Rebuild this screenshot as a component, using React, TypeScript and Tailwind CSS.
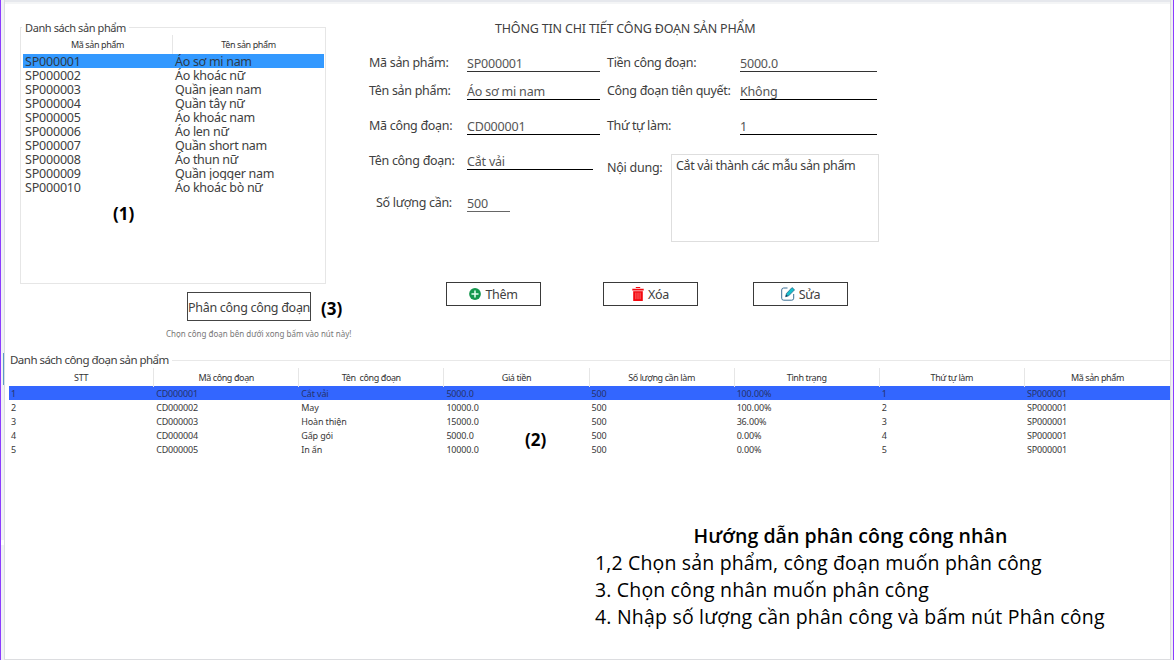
import React from "react";

const products = [
  ["SP000001", "Áo sơ mi nam"],
  ["SP000002", "Áo khoác nữ"],
  ["SP000003", "Quần jean nam"],
  ["SP000004", "Quần tây nữ"],
  ["SP000005", "Áo khoác nam"],
  ["SP000006", "Áo len nữ"],
  ["SP000007", "Quần short nam"],
  ["SP000008", "Áo thun nữ"],
  ["SP000009", "Quần jogger nam"],
  ["SP000010", "Áo khoác bò nữ"],
];

const stageHeaders = [
  "STT",
  "Mã công đoạn",
  "Tên\u00a0 công đoạn",
  "Giá tiền",
  "Số lượng cần làm",
  "Tình trạng",
  "Thứ tự làm",
  "Mã sản phẩm",
];

const stages = [
  ["1", "CD000001", "Cắt vải", "5000.0", "500", "100.00%", "1", "SP000001"],
  ["2", "CD000002", "May", "10000.0", "500", "100.00%", "2", "SP000001"],
  ["3", "CD000003", "Hoàn thiện", "15000.0", "500", "36.00%", "3", "SP000001"],
  ["4", "CD000004", "Gấp gói", "5000.0", "500", "0.00%", "4", "SP000001"],
  ["5", "CD000005", "In ấn", "10000.0", "500", "0.00%", "5", "SP000001"],
];

type FieldProps = {
  label: string;
  value: string;
  row: string;
  labelBox: string;
  valueBox: string;
};

function Field({ label, value, row, labelBox, valueBox }: FieldProps) {
  return (
    <div className={`flex items-end whitespace-nowrap ${row}`}>
      <div className={`shrink-0 leading-[18px] ${labelBox}`}>{label}</div>
      <div className={`shrink-0 border-b leading-[15px] text-[#555] ${valueBox}`}>{value}</div>
    </div>
  );
}

function ActionButton({ label, icon, className }: { label: string; icon: React.ReactNode; className: string }) {
  return (
    <button
      className={`flex h-[24px] w-[95px] items-center justify-center gap-[4px] border border-[#3a3a3a] bg-white ${className}`}
    >
      {icon}
      <span className="pt-[2px] leading-[18px] tracking-[-0.3px]">{label}</span>
    </button>
  );
}

function AddIcon() {
  return (
    <svg width="12" height="12" viewBox="0 0 12 12">
      <circle cx="6" cy="6" r="5.9" fill="#16984f" />
      <path d="M6 3v6M3 6h6" stroke="#e8fff2" strokeWidth="1.5" strokeLinecap="round" />
    </svg>
  );
}

function TrashIcon() {
  return (
    <svg width="12" height="14" viewBox="0 0 12 14">
      <path d="M3.8 0h4.4v1H3.8zM0.3 1.7h11.4v1.8H0.3z" fill="#f4080f" />
      <path d="M1.2 4.2h9.6V14H1.2z" fill="#f4080f" />
      <path d="M3.9 5.6v6.6M6 5.6v6.6M8.1 5.6v6.6" stroke="#ff9a9a" strokeWidth="0.7" />
    </svg>
  );
}

function EditIcon() {
  return (
    <svg width="14" height="14" viewBox="0 0 14 14">
      <path
        d="M6.5 1H2.6A2 2 0 0 0 .7 3v8.2a2 2 0 0 0 2 2h8a2 2 0 0 0 2-2V7"
        fill="none"
        stroke="#3a7096"
        strokeWidth="1"
      />
      <path d="M4.6 9.7l.9-3.3L11 .6l2.6 2.2-5.9 6z" fill="#18bfcd" stroke="#1d5c80" strokeWidth="0.7" />
      <path d="M4.6 9.7l.5-2.2 1.8 1.6z" fill="#173f5f" />
    </svg>
  );
}

export default function App() {
  return (
    <div className="flex h-[660px] w-[1174px] overflow-hidden bg-white font-['Noto_Sans',sans-serif] text-[12.5px] tracking-[-0.2px] text-[#404040]">
      <div className="w-px shrink-0 bg-[#8b3dff]" />
      <div className="flex w-[4px] shrink-0 flex-col border-r border-[#d9dde0] bg-[#f1f2f4]">
        <div className="mt-[353px] h-[32px] w-px self-end bg-[#5b9bc8]" />
        <div className="mt-[155px] h-[5px] w-[3px] bg-white" />
      </div>
      <div className="flex min-w-0 flex-1 flex-col border-b border-[#dcdde0]">
        <div className="h-[2px] shrink-0 bg-[#e6e8ed]" />
        <div className="h-[2px] shrink-0 bg-[#f4f5f6]" />

        <div className="flex h-[348px] shrink-0">
          <section className="ml-[15px] w-[349px] shrink-0">
            <fieldset className="mt-[16px] flex h-[264px] w-[306px] flex-col border border-[#e6e6e6] pl-[2px] pr-px">
              <legend className="-ml-px h-[15px] pl-[3px] pr-[3px] text-[11px] leading-[15px] tracking-[-0.4px]">
                Danh sách sản phẩm
              </legend>
              <div className="flex h-[19px] shrink-0 text-center text-[9px] leading-[20px] tracking-[-0.4px] text-[#333]">
                <div className="w-[150px] border-r border-[#e6e6e6]">Mã sản phẩm</div>
                <div className="flex-1">Tên sản phẩm</div>
              </div>
              {products.map(([code, name], i) => (
                <div
                  key={code}
                  className={`flex h-[14px] w-[301px] shrink-0 overflow-hidden whitespace-nowrap leading-[16px] ${
                    i === 0 ? "bg-[#3399ff] text-[#2c3a4a]" : ""
                  }`}
                >
                  <div className="w-[150px] pl-[2px]">{code}</div>
                  <div className="pl-[2px] tracking-[-0.3px]">{name}</div>
                </div>
              ))}
              <div className="pl-[90px] pt-[8px] text-[17px] font-bold leading-[24px] tracking-normal text-black">(1)</div>
            </fieldset>
            <div className="ml-[167px] mt-[8px] flex items-center">
              <button className="flex h-[29px] w-[124px] shrink-0 items-center justify-center whitespace-nowrap border border-[#444] pt-[3px] leading-[20px] tracking-[-0.3px]">
                Phân công công đoạn
              </button>
              <span className="ml-[10px] pt-[4px] text-[17px] font-bold leading-[24px] tracking-normal text-black">(3)</span>
            </div>
            <div className="ml-[146px] mt-[6px] whitespace-nowrap text-[8px] leading-[14px] tracking-normal text-[#777]">
              Chọn công đoạn bên dưới xong bấm vào nút này!
            </div>
          </section>

          <section className="w-[512px]">
            <h1 className="pl-[126px] pt-[16px] leading-[18px] tracking-[-0.18px]">THÔNG TIN CHI TIẾT CÔNG ĐOẠN SẢN PHẨM</h1>
            <div className="mt-[14px] flex">
              <div className="w-[238px] shrink-0">
                <Field label="Mã sản phẩm:" value="SP000001" row="h-[20px]" labelBox="w-[98px] tracking-[-0.3px]" valueBox="w-[133px] border-[#333]" />
                <Field label="Tên sản phẩm:" value="Áo sơ mi nam" row="h-[28px]" labelBox="w-[98px] tracking-[-0.3px]" valueBox="w-[133px] border-black" />
                <Field label="Mã công đoạn:" value="CD000001" row="h-[35px]" labelBox="w-[98px] tracking-[-0.3px]" valueBox="w-[133px] border-black" />
                <Field label="Tên công đoạn:" value="Cắt vải" row="h-[35px]" labelBox="w-[98px] tracking-[-0.3px]" valueBox="w-[126px] border-black" />
                <Field label="Số lượng cần:" value="500" row="h-[42px]" labelBox="w-[98px] pl-[7px] tracking-[-0.3px]" valueBox="w-[43px] border-[#666]" />
              </div>
              <div className="w-[272px] shrink-0">
                <Field label="Tiền công đoạn:" value="5000.0" row="h-[20px]" labelBox="w-[133px] tracking-[-0.3px]" valueBox="w-[137px] border-[#333]" />
                <Field label="Công đoạn tiên quyết:" value="Không" row="h-[28px]" labelBox="w-[133px] tracking-[-0.3px]" valueBox="w-[137px] border-black" />
                <Field label="Thứ tự làm:" value="1" row="h-[35px]" labelBox="w-[133px] tracking-[-0.35px]" valueBox="w-[137px] border-black" />
                <div className="flex pt-[19px]">
                  <div className="w-[64px] pt-[5px] leading-[18px] tracking-[-0.25px]">Nội dung:</div>
                  <div className="h-[88px] w-[208px] border border-[#dedede] pl-[4px] pt-[2px] leading-[18px] tracking-[-0.37px]">
                    Cắt vải thành các mẫu sản phẩm
                  </div>
                </div>
              </div>
            </div>
            <div className="mt-[40px] flex pl-[77px]">
              <ActionButton label="Thêm" icon={<AddIcon />} className="" />
              <ActionButton label="Xóa" icon={<TrashIcon />} className="ml-[62px]" />
              <ActionButton label="Sửa" icon={<EditIcon />} className="ml-[55px]" />
            </div>
          </section>
        </div>

        <section className="ml-[3px] h-[170px] shrink-0">
          <div className="flex h-[16px] items-center">
            <h2 className="ml-[2px] mr-[3px] whitespace-nowrap text-[11.5px] leading-[16px] tracking-[-0.52px]">Danh sách công đoạn sản phẩm</h2>
            <div className="h-px flex-1 bg-[#e8e8e8]" />
          </div>
          <div className="ml-px grid h-[18px] grid-cols-8 text-center text-[9px] leading-[19px] tracking-[-0.4px] text-[#333]">
            {stageHeaders.map((title, i) => (
              <div key={title} className={i < 7 ? "border-r border-[#e6e6e6]" : ""}>
                {title}
              </div>
            ))}
          </div>
          {stages.map((cells, i) => (
            <div
              key={cells[0]}
              className={`ml-px grid h-[14px] grid-cols-8 text-[9px] leading-[15px] tracking-[-0.15px] ${
                i === 0 ? "bg-[#3366ff] text-[#26336b]" : "text-[#383838]"
              }`}
            >
              {cells.map((cell, c) => (
                <div key={c} className="pl-[2px]">
                  {cell}
                </div>
              ))}
            </div>
          ))}
          <div className="-mt-[28px] pl-[517px] text-[17px] font-bold leading-[24px] tracking-normal text-black">(2)</div>
        </section>

        <section className="ml-[590px] w-[530px] whitespace-nowrap font-['Open_Sans',sans-serif] text-[19.5px] leading-[27px] tracking-[0.16px] text-black">
          <h2 className="w-[511px] pt-px text-center font-semibold leading-[26px] tracking-[0.07px]">Hướng dẫn phân công công nhân</h2>
          <p>1,2 Chọn sản phẩm, công đoạn muốn phân công</p>
          <p>3. Chọn công nhân muốn phân công</p>
          <p className="tracking-[0.2px]">4. Nhập số lượng cần phân công và bấm nút Phân công</p>
        </section>
      </div>
      <div className="w-[3px] shrink-0 border-l border-[#dcdde0] bg-[#eef0f2]" />
      <div className="w-px shrink-0 bg-[#8b3dff]" />
    </div>
  );
}
